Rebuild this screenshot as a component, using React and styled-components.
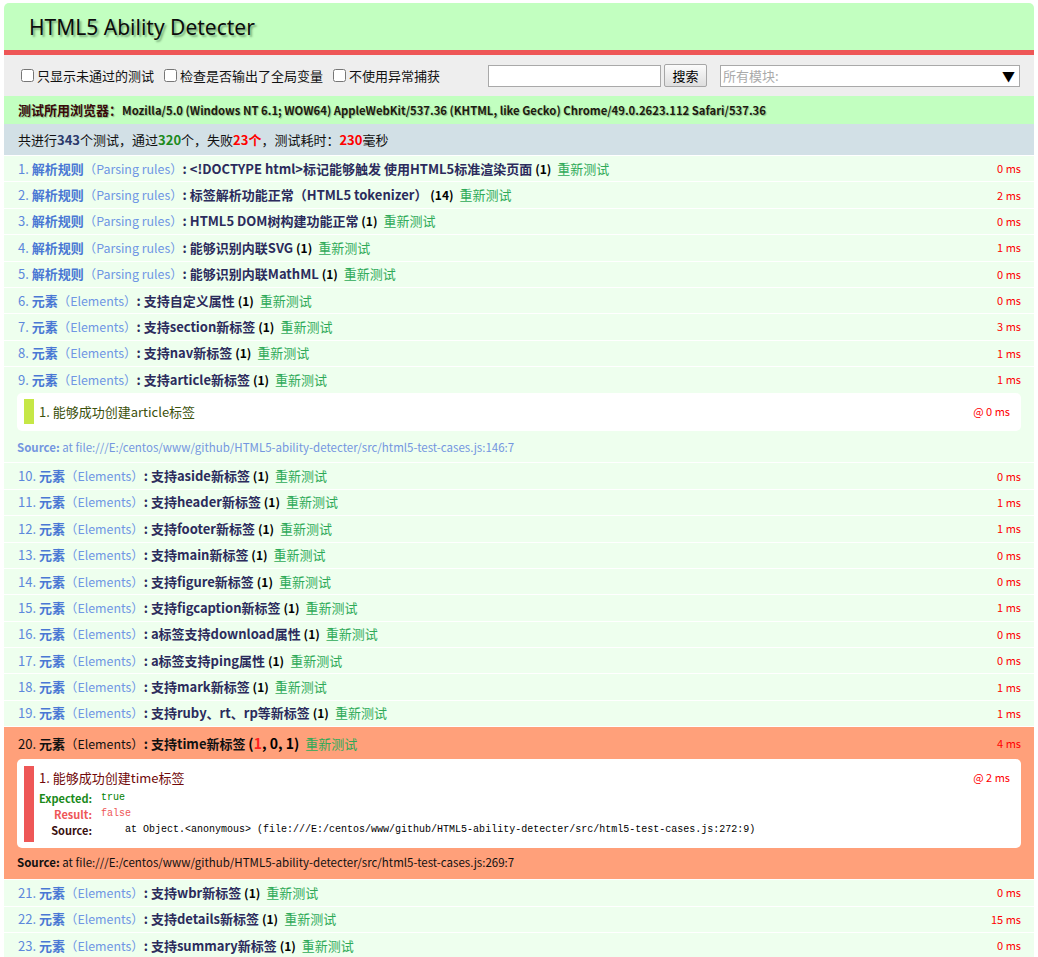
import React from "react";
import styled, { createGlobalStyle } from "styled-components";

const GlobalStyle = createGlobalStyle`
  html, body {
    margin: 0;
    background: #fff;
  }
  body {
    padding: 3px 4px 0;
    font-family: "Noto Sans CJK SC", "Noto Sans", sans-serif;
    color: #000;
  }
`;

const tests = [
  { mod: "解析规则", en: "Parsing rules", name: "<!DOCTYPE html>标记能够触发 使用HTML5标准渲染页面", count: "1", time: "0 ms" },
  { mod: "解析规则", en: "Parsing rules", name: "标签解析功能正常（HTML5 tokenizer）", count: "14", time: "2 ms" },
  { mod: "解析规则", en: "Parsing rules", name: "HTML5 DOM树构建功能正常", count: "1", time: "0 ms" },
  { mod: "解析规则", en: "Parsing rules", name: "能够识别内联SVG", count: "1", time: "1 ms" },
  { mod: "解析规则", en: "Parsing rules", name: "能够识别内联MathML", count: "1", time: "0 ms" },
  { mod: "元素", en: "Elements", name: "支持自定义属性", count: "1", time: "0 ms" },
  { mod: "元素", en: "Elements", name: "支持section新标签", count: "1", time: "3 ms" },
  { mod: "元素", en: "Elements", name: "支持nav新标签", count: "1", time: "1 ms" },
  {
    mod: "元素", en: "Elements", name: "支持article新标签", count: "1", time: "1 ms",
    open: true, assert: "能够成功创建article标签", assertTime: "@ 0 ms",
    source: "at file:///E:/centos/www/github/HTML5-ability-detecter/src/html5-test-cases.js:146:7",
  },
  { mod: "元素", en: "Elements", name: "支持aside新标签", count: "1", time: "0 ms" },
  { mod: "元素", en: "Elements", name: "支持header新标签", count: "1", time: "1 ms" },
  { mod: "元素", en: "Elements", name: "支持footer新标签", count: "1", time: "1 ms" },
  { mod: "元素", en: "Elements", name: "支持main新标签", count: "1", time: "0 ms" },
  { mod: "元素", en: "Elements", name: "支持figure新标签", count: "1", time: "0 ms" },
  { mod: "元素", en: "Elements", name: "支持figcaption新标签", count: "1", time: "1 ms" },
  { mod: "元素", en: "Elements", name: "a标签支持download属性", count: "1", time: "0 ms" },
  { mod: "元素", en: "Elements", name: "a标签支持ping属性", count: "1", time: "0 ms" },
  { mod: "元素", en: "Elements", name: "支持mark新标签", count: "1", time: "1 ms" },
  { mod: "元素", en: "Elements", name: "支持ruby、rt、rp等新标签", count: "1", time: "1 ms" },
  {
    mod: "元素", en: "Elements", name: "支持time新标签", count: "1", time: "4 ms",
    failed: true, open: true, assert: "能够成功创建time标签", assertTime: "@ 2 ms",
    expected: "true", result: "false",
    trace: "    at Object.<anonymous> (file:///E:/centos/www/github/HTML5-ability-detecter/src/html5-test-cases.js:272:9)",
    source: "at file:///E:/centos/www/github/HTML5-ability-detecter/src/html5-test-cases.js:269:7",
  },
  { mod: "元素", en: "Elements", name: "支持wbr新标签", count: "1", time: "0 ms" },
  { mod: "元素", en: "Elements", name: "支持details新标签", count: "1", time: "15 ms" },
  { mod: "元素", en: "Elements", name: "支持summary新标签", count: "1", time: "0 ms" },
];

const App = () => {
  return (
    <>
      <GlobalStyle />
      <Header>HTML5 Ability Detecter</Header>
      <Banner />
      <Toolbar>
        <CheckLabel><Check type="checkbox" />只显示未通过的测试</CheckLabel>
        <CheckLabel><Check type="checkbox" />检查是否输出了全局变量</CheckLabel>
        <CheckLabel><Check type="checkbox" />不使用异常捕获</CheckLabel>
        <SearchGroup>
          <SearchInput type="text" />
          <SearchButton>搜索</SearchButton>
          <ModuleSelect>
            <span>所有模块:</span>
            <Arrow>▼</Arrow>
          </ModuleSelect>
        </SearchGroup>
      </Toolbar>
      <UserAgent>
        <UaLabel>测试所用浏览器：</UaLabel>
        Mozilla/5.0 (Windows NT 6.1; WOW64) AppleWebKit/537.36 (KHTML, like Gecko) Chrome/49.0.2623.112 Safari/537.36
      </UserAgent>
      <TestResult>
        共进行<Num color="#2b3a6b">343</Num>个测试，通过<Num color="#1c8a1c">320</Num>个，失败
        <Num color="#ff0000">23个</Num>，测试耗时：<Num color="#ff0000">230</Num>毫秒
      </TestResult>
      <Tests>
        {tests.map((t, i) => (
          <TestItem key={i} $failed={t.failed}>
            <TestHead>
              <Title>
                <Index $failed={t.failed}>{i + 1}. </Index>
                <ModuleName $failed={t.failed}>
                  {t.mod}<ModuleEn $failed={t.failed}>（{t.en}）</ModuleEn>
                </ModuleName>
                <Colon $failed={t.failed}>:</Colon>
                <TestName $failed={t.failed}>{t.name}</TestName>{" "}
                {t.failed ? (
                  <Counts $big>
                    (<Bad>1</Bad>, 0, 1)
                  </Counts>
                ) : (
                  <Counts>({t.count})</Counts>
                )}
                <Rerun>重新测试</Rerun>
              </Title>
              <Runtime>{t.time}</Runtime>
            </TestHead>
            {t.open && (
              <>
                <AssertList $failed={t.failed}>
                  <AssertItem $failed={t.failed}>
                    <AssertHead>
                      <AssertMsg $failed={t.failed}>1. {t.assert}</AssertMsg>
                      <Runtime>{t.assertTime}</Runtime>
                    </AssertHead>
                    {t.failed && (
                      <AssertTable>
                        <tbody>
                          <tr>
                            <Th $color="#1a8a1a">Expected:</Th>
                            <Td><Pre $color="#008000">{t.expected}</Pre></Td>
                          </tr>
                          <tr>
                            <Th $color="#ee5757">Result:</Th>
                            <Td><Pre $color="#ee5757">{t.result}</Pre></Td>
                          </tr>
                          <tr>
                            <Th $color="#3a1010">Source:</Th>
                            <Td><Pre $color="#000">{t.trace}</Pre></Td>
                          </tr>
                        </tbody>
                      </AssertTable>
                    )}
                  </AssertItem>
                </AssertList>
                <Source $failed={t.failed}>
                  <b>Source:</b> {t.source}
                </Source>
              </>
            )}
          </TestItem>
        ))}
      </Tests>
    </>
  );
};

const Header = styled.h1`
  margin: 0;
  height: 47px;
  padding: 0 0 0 25px;
  line-height: 48px;
  font-family: "Noto Sans", sans-serif;
  font-size: 21px;
  font-weight: normal;
  color: #0c0c0c;
  background: #c2ffc0;
  border-radius: 5px 5px 0 0;
  text-shadow: 2px 2px 2px rgba(40, 80, 40, 0.45);
`;

const Banner = styled.div`
  height: 5px;
  background: #ee5757;
`;

const Toolbar = styled.div`
  display: flex;
  align-items: center;
  height: 41px;
  padding: 0 14px 0 17px;
  background: #eee;
  font-size: 13px;
`;

const CheckLabel = styled.label`
  display: flex;
  align-items: center;
  margin-right: 10px;
  color: #111;
`;

const Check = styled.input`
  width: 13px;
  height: 13px;
  margin: 0 3px 0 0;
`;

const SearchGroup = styled.div`
  display: flex;
  align-items: center;
  margin-left: auto;
`;

const SearchInput = styled.input`
  box-sizing: border-box;
  width: 173px;
  height: 22px;
  border: 1px solid #a9a9a9;
  background: #fff;
  padding: 0 3px;
  margin: 0;
`;

const SearchButton = styled.button`
  box-sizing: border-box;
  width: 43px;
  height: 23px;
  margin-left: 3px;
  padding: 0;
  border: 1px solid #a6a6a6;
  border-radius: 2px;
  background: linear-gradient(#fbfbfb, #dedede);
  font-family: "Noto Sans CJK SC", sans-serif;
  font-size: 13px;
  color: #000;
`;

const ModuleSelect = styled.div`
  box-sizing: border-box;
  display: flex;
  align-items: center;
  justify-content: space-between;
  width: 300px;
  height: 22px;
  margin-left: 13px;
  padding: 0 4px 0 2px;
  border: 1px solid #a9a9a9;
  background: #fff;
  color: #aaa;
  font-size: 13px;
`;

const Arrow = styled.span`
  color: #000;
  font-size: 13px;
`;

const UserAgent = styled.div`
  height: 28px;
  padding-left: 14px;
  line-height: 28px;
  background: #c2ffc0;
  font-size: 11.3px;
  font-weight: bold;
  color: #1e1a10;
  text-shadow: 1px 1px 1px rgba(40, 80, 40, 0.35);
  white-space: nowrap;
  overflow: hidden;
`;

const UaLabel = styled.span`
  font-size: 13px;
  color: #3a0a0a;
`;

const TestResult = styled.div`
  height: 31px;
  padding-left: 14px;
  line-height: 31px;
  background: #d2e0e6;
  font-size: 13px;
  color: #111;
`;

const Num = styled.b`
  color: ${(p) => p.color};
`;

const Tests = styled.ol`
  list-style: none;
  margin: 1px 0 0;
  padding: 0;
`;

const TestItem = styled.li`
  padding: ${(p) => (p.$failed ? "9px 13px 5px" : "5.2px 13px")};
  border-bottom: 1px solid #fff;
  background: ${(p) => (p.$failed ? "#ffa07a" : "#eeffee")};
  font-size: 13px;
  line-height: 15px;
`;

const TestHead = styled.div`
  display: flex;
  align-items: center;
  height: 15px;
  padding-left: 1px;
`;

const Title = styled.div`
  flex: 1;
  white-space: nowrap;
  line-height: 15px;
`;

const Index = styled.span`
  color: ${(p) => (p.$failed ? "#111" : "#5d88dc")};
`;

const ModuleName = styled.span`
  font-weight: bold;
  color: ${(p) => (p.$failed ? "#111" : "#4a78d4")};
`;

const ModuleEn = styled.span`
  font-weight: normal;
  font-size: 12.4px;
  color: ${(p) => (p.$failed ? "#111" : "#6f96e4")};
`;

const Colon = styled.b`
  margin: 0 3px 0 0;
  color: ${(p) => (p.$failed ? "#111" : "#2b2b5c")};
`;

const TestName = styled.b`
  color: ${(p) => (p.$failed ? "#111" : "#2b2b5c")};
`;

const Counts = styled.b`
  font-size: ${(p) => (p.$big ? "14px" : "12px")};
  color: #000;
`;

const Bad = styled.span`
  color: #ff2020;
`;

const Rerun = styled.span`
  margin-left: 6px;
  color: #2eaa58;
`;

const Runtime = styled.span`
  font-size: 11px;
  line-height: 15px;
  color: #ff0000;
`;

const AssertList = styled.ol`
  list-style: none;
  margin: ${(p) => (p.$failed ? "8px" : "6px")} 0 0;
  padding: ${(p) => (p.$failed ? "7px 7px 6px" : "6px 7px 7px")};
  background: #fff;
  border-radius: 5px;
`;

const AssertItem = styled.li`
  padding: ${(p) => (p.$failed ? "4px 4px 4px 5px" : "5px 4px 5px 5px")};
  border-left: 10px solid ${(p) => (p.$failed ? "#ee5757" : "#c6e746")};
`;

const AssertHead = styled.div`
  display: flex;
  justify-content: space-between;
  align-items: center;
  height: 15px;
`;

const AssertMsg = styled.span`
  line-height: 15px;
  color: ${(p) => (p.$failed ? "#710909" : "#3c510c")};
`;

const AssertTable = styled.table`
  border-collapse: collapse;
  margin-top: 5px;
`;

const Th = styled.th`
  height: 16px;
  padding: 0 9px 0 0;
  text-align: right;
  vertical-align: top;
  font-size: 11px;
  font-weight: bold;
  line-height: 16px;
  color: ${(p) => p.$color};
`;

const Td = styled.td`
  padding: 0;
  vertical-align: top;
  line-height: 16px;
`;

const Pre = styled.pre`
  margin: 0;
  font-family: "Liberation Mono", monospace;
  font-size: 10px;
  line-height: 16px;
  white-space: pre;
  color: ${(p) => p.$color};
`;

const Source = styled.div`
  height: 16px;
  margin: ${(p) => (p.$failed ? "6px 0 4px" : "8px 0 2px")};
  font-size: 11.5px;
  line-height: 16px;
  color: ${(p) => (p.$failed ? "#111" : "#7496e0")};
`;

export default App;
